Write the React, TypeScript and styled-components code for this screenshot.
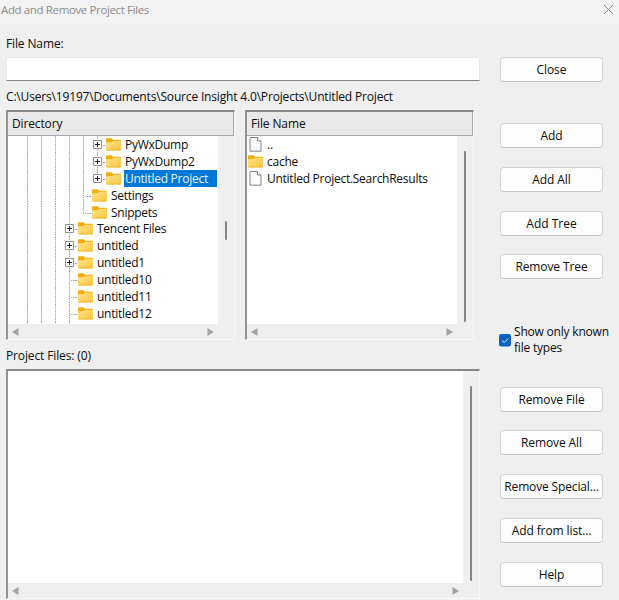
import React from "react";
import styled, { createGlobalStyle, css } from "styled-components";

const GlobalStyle = createGlobalStyle`
  * { box-sizing: border-box; }
  body {
    margin: 0;
    background: #efefef;
    overflow: hidden;
  }
`;

const Dialog = styled.div`
  width: 619px;
  height: 600px;
  display: flex;
  flex-direction: column;
  overflow: hidden;
  background: #efefef;
  color: #0c0c0c;
  font-family: "Open Sans", "Noto Sans", sans-serif;
  font-size: 12px;
  letter-spacing: -0.13px;
  line-height: 18px;
  white-space: nowrap;
`;

const TitleBar = styled.header`
  flex: none;
  height: 24px;
  display: flex;
  justify-content: space-between;
  align-items: flex-start;
  padding: 2px 5px 0 1px;
  background: #f3f3f3;
  color: #8d8d8d;
  font-size: 11.5px;
  letter-spacing: -0.37px;
  line-height: 16px;
`;

const CloseIcon = styled.svg`
  width: 11px;
  height: 11px;
  margin-top: 2px;
`;

const Body = styled.div`
  display: flex;
  height: 576px;
`;

const Main = styled.main`
  width: 500px;
  padding: 11px 0 0 6px;
`;

const Label = styled.div<{ $gap: number; $spacing?: number }>`
  height: 16px;
  margin-bottom: ${(p) => p.$gap}px;
  letter-spacing: ${(p) => p.$spacing ?? -0.13}px;
`;

const NameInput = styled.input`
  display: block;
  width: 474px;
  height: 24px;
  margin-bottom: 7px;
  padding: 0 6px;
  border: 1px solid #e8e8e8;
  border-bottom: 1px solid #858585;
  border-radius: 1px;
  outline: none;
  background: #fff;
  font: inherit;
`;

const Panels = styled.div`
  display: flex;
  gap: 10px;
  height: 231px;
  margin-bottom: 6px;
`;

const Panel = styled.section<{ $width: number; $height: number }>`
  width: ${(p) => p.$width}px;
  height: ${(p) => p.$height}px;
  display: flex;
  flex-direction: column;
  border: 2px solid;
  border-color: #868686 #f8f8f8 #f8f8f8 #929292;
  border-right-width: 1px;
  border-bottom-width: 1px;
  background: #efefef;
`;

const PanelHeader = styled.div`
  flex: none;
  height: 24px;
  padding: 3px 4px 0;
  border-right: 1px solid #a6a6a6;
  border-bottom: 1px solid #a6a6a6;
  background: #e9e9e9;
`;

const PanelBody = styled.div`
  flex: 1;
  min-height: 0;
  display: grid;
  grid-template-columns: 1fr 16px;
  grid-template-rows: 1fr 15px;
`;

const Content = styled.div`
  overflow: hidden;
  background: #fff;
`;

const VerticalTrack = styled.div<{ $top: number }>`
  padding: ${(p) => p.$top}px 0 0 7px;
`;

const Thumb = styled.div<{ $length: number }>`
  width: 2px;
  height: ${(p) => p.$length}px;
  border-radius: 1px;
  background: #858585;
`;

const HorizontalTrack = styled.div`
  display: flex;
  align-items: center;
  justify-content: space-between;
  padding: 0 4px;
`;

const Arrow = styled.svg`
  width: 7px;
  height: 8px;
  fill: #a3a3a3;
`;

const Row = styled.div`
  height: 16.9px;
  display: flex;
  align-items: stretch;
`;

const Tree = styled(Content)`
  padding-left: 12px;
`;

const vertical = "repeating-linear-gradient(to bottom, #aaa 0 1px, #e4e4e4 1px 2px)";
const horizontal = "repeating-linear-gradient(to right, #aaa 0 1px, #e8e8e8 1px 2px)";

const Guide = styled.div<{ $half?: boolean; $stub?: boolean }>`
  flex: none;
  width: 14px;
  display: flex;
  align-items: center;
  background-repeat: no-repeat;
  background-image: ${vertical}${(p) => p.$stub && css`, ${horizontal}`};
  background-position: 7px 0, 7px 9px;
  background-size: 1px ${(p) => (p.$half ? "9px" : "100%")}, 7px 1px;
`;

const Stub = styled.div`
  flex: none;
  width: 2px;
  height: 1px;
  margin-top: 9px;
  background: ${horizontal};
`;

const ExpandBox = styled.svg`
  width: 9px;
  height: 9px;
  margin: 0 0 0 3px;
`;

const FolderSvg = styled.svg`
  flex: none;
  width: 15px;
  height: 13px;
  margin-top: 2px;
`;

const FileSvg = styled.svg`
  flex: none;
  width: 13px;
  height: 16px;
  margin: 0 1px;
`;

const ItemName = styled.span<{ $selected?: boolean }>`
  margin-left: 3px;
  padding: 0 9px 0 1px;
  line-height: 17px;
  letter-spacing: -0.26px;
  ${(p) => p.$selected && css`background: #0078d7; color: #e9f5ff;`}
`;

const FileRows = styled(Content)`
  padding-left: 1px;
`;

const Actions = styled.aside`
  width: 119px;
  padding-top: 33px;
`;

const Button = styled.button<{ $gap: number; $spacing?: number }>`
  display: block;
  width: 103px;
  height: 25px;
  margin: 0 0 ${(p) => p.$gap}px;
  padding: 0;
  border: 1px solid #d2d2d2;
  border-bottom-color: #c4c4c4;
  border-radius: 4px;
  background: #fdfdfd;
  color: #0c0c0c;
  font: inherit;
  letter-spacing: ${(p) => p.$spacing ?? -0.1}px;
`;

const CheckRow = styled.div`
  height: 32px;
  display: flex;
  align-items: center;
  gap: 3px;
  margin: 45px 0 31px -1px;
  letter-spacing: -0.2px;
  line-height: 16px;
`;

const CheckBox = styled.svg`
  flex: none;
  width: 12px;
  height: 13px;
  margin-top: 1px;
`;

const Folder = () => (
  <FolderSvg viewBox="0 0 15 13">
    <defs>
      <linearGradient id="folder" x1="0" y1="0" x2="1" y2="1">
        <stop offset="0" stopColor="#ffe391" />
        <stop offset="1" stopColor="#fcc638" />
      </linearGradient>
    </defs>
    <path d="M0 1.2Q0 .2 1 .2H5.5L7.2 1.7H14Q15 1.7 15 2.7V6H0Z" fill="#f1ad0b" />
    <path d="M0 4.2H5.5L7.2 2.8H15V11.4Q15 12.4 14 12.4H1Q0 12.4 0 11.4Z" fill="url(#folder)" />
    <path d="M.5 12H14.5" stroke="#efb22d" strokeWidth=".8" />
  </FolderSvg>
);

const File = () => (
  <FileSvg viewBox="0 0 13 16" fill="#fbfbfb" stroke="#858585">
    <path d="M1 1.5H8.5L12 5V15.2H1Z" />
    <path d="M8.5 1.5V5H12" />
  </FileSvg>
);

const Plus = () => (
  <ExpandBox viewBox="0 0 9 9">
    <path d="M.5 .5H8.5V8.5H.5Z" fill="#fff" stroke="#919191" />
    <path d="M2 4.5H7M4.5 2V7" stroke="#222" />
  </ExpandBox>
);

const LeftArrow = () => <Arrow viewBox="0 0 7 8"><path d="M6.5 0V8L0 4Z" /></Arrow>;
const RightArrow = () => <Arrow viewBox="0 0 7 8"><path d="M.5 0V8L7 4Z" /></Arrow>;

type Node = { name: string; depth: number; expandable?: boolean; last?: boolean; selected?: boolean };

const nodes: Node[] = [
  { name: "PyWxDump", depth: 5, expandable: true },
  { name: "PyWxDump2", depth: 5, expandable: true },
  { name: "Untitled Project", depth: 5, expandable: true, last: true, selected: true },
  { name: "Settings", depth: 4 },
  { name: "Snippets", depth: 4, last: true },
  { name: "Tencent Files", depth: 3, expandable: true },
  { name: "untitled", depth: 3, expandable: true },
  { name: "untitled1", depth: 3, expandable: true },
  { name: "untitled10", depth: 3 },
  { name: "untitled11", depth: 3 },
  { name: "untitled12", depth: 3 },
];

const TreeRow = ({ node }: { node: Node }) => (
  <Row>
    {Array.from({ length: node.depth }, (_, i) => <Guide key={i} />)}
    <Guide $stub $half={node.last}>{node.expandable && <Plus />}</Guide>
    <Stub />
    <Folder />
    <ItemName $selected={node.selected}>{node.name}</ItemName>
  </Row>
);

const Scrollbars = ({ top, length, children }: { top: number; length: number; children: React.ReactNode }) => (
  <PanelBody>
    {children}
    <VerticalTrack $top={top}><Thumb $length={length} /></VerticalTrack>
    <HorizontalTrack><LeftArrow /><RightArrow /></HorizontalTrack>
  </PanelBody>
);

export default function App() {
  return (
    <Dialog>
      <GlobalStyle />
      <TitleBar>
        <span>Add and Remove Project Files</span>
        <CloseIcon viewBox="0 0 11 11"><path d="M1 1L10 10M10 1L1 10" stroke="#8c8c8c" /></CloseIcon>
      </TitleBar>
      <Body>
        <Main>
          <Label $gap={6}>File Name:</Label>
          <NameInput aria-label="File Name" />
          <Label $gap={6} $spacing={-0.17}>C:\Users\19197\Documents\Source Insight 4.0\Projects\Untitled Project</Label>
          <Panels>
            <Panel $width={229} $height={230}>
              <PanelHeader>Directory</PanelHeader>
              <Scrollbars top={85} length={19}>
                <Tree>
                  {nodes.map((node) => <TreeRow key={node.name} node={node} />)}
                  <Row>{[0, 1, 2, 3].map((i) => <Guide key={i} />)}</Row>
                </Tree>
              </Scrollbars>
            </Panel>
            <Panel $width={229} $height={230}>
              <PanelHeader>File Name</PanelHeader>
              <Scrollbars top={15} length={171}>
                <FileRows>
                  <Row><File /><ItemName>..</ItemName></Row>
                  <Row><Folder /><ItemName>cache</ItemName></Row>
                  <Row><File /><ItemName>Untitled Project.SearchResults</ItemName></Row>
                </FileRows>
              </Scrollbars>
            </Panel>
          </Panels>
          <Label $gap={6}>Project Files: (0)</Label>
          <Panel $width={474} $height={230}>
            <Scrollbars top={15} length={195}><Content /></Scrollbars>
          </Panel>
        </Main>
        <Actions>
          <Button $gap={41}>Close</Button>
          <Button $gap={19}>Add</Button>
          <Button $gap={19}>Add All</Button>
          <Button $gap={18} $spacing={0}>Add Tree</Button>
          <Button $gap={0}>Remove Tree</Button>
          <CheckRow>
            <CheckBox viewBox="0 0 12 13">
              <rect width="12" height="12.5" rx="2.5" fill="#0963bc" />
              <path d="M3 6.5L5.2 8.6L9.2 4.5" fill="none" stroke="#d4e7fa" />
            </CheckBox>
            <span>Show only known<br />file types</span>
          </CheckRow>
          <Button $gap={18}>Remove File</Button>
          <Button $gap={19}>Remove All</Button>
          <Button $gap={19} $spacing={-0.15}>Remove Special...</Button>
          <Button $gap={19}>Add from list...</Button>
          <Button $gap={0}>Help</Button>
        </Actions>
      </Body>
    </Dialog>
  );
}
